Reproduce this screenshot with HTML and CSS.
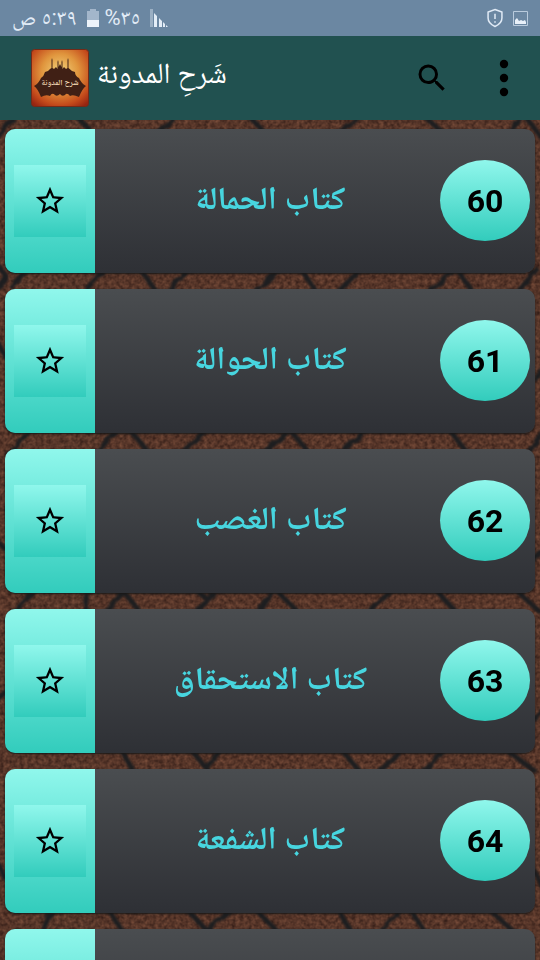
FILE: index.html
```html
<!DOCTYPE html>
<html lang="ar" dir="rtl">
<head>
  <meta charset="UTF-8">
  <meta name="viewport" content="width=device-width, initial-scale=1.0">
  <title>شَرحِ المدونة</title>
  <link rel="stylesheet" href="styles.css">
</head>
<body>
  <svg class="wall" viewBox="0 0 540 960" preserveAspectRatio="xMidYMid slice" aria-hidden="true">
    <filter id="grain" x="0" y="0" width="100%" height="100%" color-interpolation-filters="sRGB">
      <feTurbulence type="fractalNoise" baseFrequency="0.25" numOctaves="3" seed="8"/>
      <feColorMatrix values="0.32 0 0 0 0.18  0.22 0 0 0 0.1  0.16 0 0 0 0.08  0 0 0 0 1"/>
    </filter>
    <filter id="rough" color-interpolation-filters="sRGB">
      <feTurbulence type="fractalNoise" baseFrequency="0.08" numOctaves="2" seed="3"/>
      <feDisplacementMap in="SourceGraphic" scale="5"/>
      <feGaussianBlur stdDeviation="1"/>
    </filter>
    <rect width="540" height="960" filter="url(#grain)"/>
    <g class="cracks" filter="url(#rough)">
      <path d="M-10 145L14 118M76 116L90 130M155 134L180 114M245 112L266 134M340 134L362 114M420 112L446 136M505 136L524 116M525 116L545 142"/>
      <path d="M-8 258L6 276L-6 294M10 288L30 266M84 292L104 270M138 266L158 294M166 294L188 270M256 292L280 268M300 268L318 294M338 292L360 270M430 292L452 270M456 268L474 294M516 294L538 268"/>
      <path d="M8 456L30 430M96 454L116 430M130 430L150 454M206 430L180 454M262 454L290 430M290 430L310 454M340 454L366 430M450 430L468 454M526 456L544 430"/>
      <path d="M14 612L38 588M84 612L88 588M104 612L124 592L140 612M196 590L208 600L216 590M196 612L208 600M258 612L272 590M276 590L298 612M370 612L392 590M436 590L456 612M516 590L540 612"/>
      <path d="M120 748L134 772M190 748L206 768L222 748M340 748L360 772M380 772L402 748M444 748L424 772M504 748L536 772"/>
      <path d="M38 934L54 908M108 908L124 934M186 908L206 930L232 908M254 908L280 934M338 908L352 934M378 934L402 908M410 908L426 934M488 908L516 934"/>
      <path d="M-4 340L8 360M-4 540L6 550M-4 700L8 690M-4 860L6 880M534 380L544 370M534 560L544 550M534 720L544 710M534 870L544 890"/>
    </g>
  </svg>

  <div class="statusbar">
    <div class="status-group">
      <svg width="15" height="15" viewBox="0 0 15 15"><path d="M.5.500H14.500V14.500H.5Z" fill="none" stroke="#b9cbdd"/><path d="M2 13V9L4 7L6 10L8 9L10 10L12 9L13 11V13Z" fill="#e8f0f9"/></svg>
      <svg width="16" height="20" viewBox="0 0 15 18" fill="none" stroke="#e1ebf6" stroke-width="1.4"><path d="M7.500 1L14 3.500V9Q14 14 7.500 17Q1 14 1 9V3.500ZM7.500 5V10M7.500 12V13.500"/></svg>
    </div>
    <div class="status-group">
      <svg width="18" height="18" viewBox="0 0 18 18" fill="#e3edf7"><path d="M0 0H3V18H0Z" opacity=".4"/><path d="M4 4L7 7V18H4ZM9 9L12 12V18H9ZM13 13L15 15V18H13ZM16 16L18 18H16Z"/></svg>
      <span class="battery">
        <span dir="ltr">%٣٥</span>
        <svg width="12" height="18" viewBox="0 0 12 18"><path d="M3 0H9V2H12V18H0V2H3Z" fill="#a3b6cb"/><path d="M0 11H12V18H0Z" fill="#edf3fa"/></svg>
      </span>
      <span>٥:٣٩ ص</span>
    </div>
  </div>

  <header class="toolbar">
    <button class="tool menu" aria-label="القائمة">
      <svg width="10" height="38" viewBox="0 0 10 38"><circle cx="5" cy="5" r="4.200"/><circle cx="5" cy="19" r="4.200"/><circle cx="5" cy="33" r="4.200"/></svg>
    </button>
    <button class="tool" aria-label="بحث">
      <svg width="36" height="36" viewBox="0 0 24 24"><path d="M15.500 14h-.79l-.28-.27A6.471 6.471 0 0 0 16 9.500 6.500 6.500 0 1 0 9.500 16c1.610 0 3.090-.59 4.230-1.570l.27.280v.79l5 4.990L20.490 19l-4.990-5zm-6 0C7.010 14 5 11.990 5 9.500S7.010 5 9.500 5 14 7.010 14 9.500 11.990 14 9.500 14z"/></svg>
    </button>
    <h1 class="title">شَرحِ المدونة</h1>
    <svg class="logo" viewBox="0 0 58 58" role="img" aria-label="شرح المدونة">
      <defs>
        <radialGradient id="sun" cx=".5" cy=".4" r=".72">
          <stop offset="0" stop-color="#f3d47c"/>
          <stop offset=".45" stop-color="#e0953d"/>
          <stop offset=".8" stop-color="#c44a1b"/>
          <stop offset="1" stop-color="#982511"/>
        </radialGradient>
      </defs>
      <rect x=".5" y=".5" width="57" height="57" rx="3" fill="url(#sun)" stroke="#742a18"/>
      <path d="M3 37Q8 34 10 29Q13 27 14 23Q17 23 19 20L20.500 19V11L21 9L21.500 11V19L23 20L25 18L26.500 20V13L27 11L27.500 13V18L29 15L30.500 18V13L31 11L31.500 13V20L33 18L35 20L36.500 19V11L37 9L37.500 11V19Q40 22 44 23Q44 27 48 29Q50 34 55 37Q51 40 48 48Q42 45 39 47Q36 43 34 46Q31 48 29 45Q26 48 24 46Q21 43 19 47Q15 45 10 48Q7 40 3 37Z" fill="#402015"/>
      <text x="29" y="36" text-anchor="middle">شرح المدونة</text>
    </svg>
  </header>

  <main class="list">
    <article class="card">
      <span class="number">60</span>
      <h2>كتاب الحمالة</h2>
      <div class="side"><button class="star" aria-label="المفضلة"><svg viewBox="0 0 24 24"><use href="#star"/></svg></button></div>
    </article>
    <article class="card">
      <span class="number">61</span>
      <h2>كتاب الحوالة</h2>
      <div class="side"><button class="star" aria-label="المفضلة"><svg viewBox="0 0 24 24"><use href="#star"/></svg></button></div>
    </article>
    <article class="card">
      <span class="number">62</span>
      <h2>كتاب الغصب</h2>
      <div class="side"><button class="star" aria-label="المفضلة"><svg viewBox="0 0 24 24"><use href="#star"/></svg></button></div>
    </article>
    <article class="card">
      <span class="number">63</span>
      <h2>كتاب الاستحقاق</h2>
      <div class="side"><button class="star" aria-label="المفضلة"><svg viewBox="0 0 24 24"><use href="#star"/></svg></button></div>
    </article>
    <article class="card">
      <span class="number">64</span>
      <h2>كتاب الشفعة</h2>
      <div class="side"><button class="star" aria-label="المفضلة"><svg viewBox="0 0 24 24"><use href="#star"/></svg></button></div>
    </article>
    <article class="card">
      <div class="side"></div>
    </article>
  </main>

  <svg class="symbols" aria-hidden="true">
    <symbol id="star" viewBox="0 0 24 24"><path d="M22 9.240l-7.190-.62L12 2 9.190 8.630 2 9.240l5.460 4.730L5.820 21 12 17.270 18.180 21l-1.630-7.030L22 9.240zM12 15.400l-3.760 2.270 1-4.280-3.320-2.880 4.380-.38L12 6.100l1.710 4.040 4.380.38-3.320 2.880 1 4.280L12 15.400z"/></symbol>
  </svg>
</body>
</html>
```
FILE: styles.css
```css
* {
  box-sizing: border-box;
  margin: 0;
  padding: 0;
}
body {
  height: 100vh;
  display: flex;
  flex-direction: column;
  overflow: hidden;
  background: #3b271f;
  font-family: Roboto, "Noto Naskh Arabic", "DejaVu Sans", sans-serif;
}
svg {
  display: block;
  flex: none;
}
button {
  border: 0;
  background: none;
}
.symbols {
  position: absolute;
  width: 0;
  height: 0;
}

/* brick wall behind the list */
.wall {
  position: fixed;
  top: 0;
  left: 0;
  z-index: -1;
  width: 100%;
  height: 100%;
}
.cracks {
  fill: none;
  stroke: #1d1e20;
  stroke-width: 5;
}

.statusbar {
  flex: none;
  height: 36px;
  padding: 0 12px;
  display: flex;
  align-items: center;
  justify-content: space-between;
  background: #6b87a2;
  color: #e1ebf6;
  font-size: 22px;
  line-height: 32px;
}
.status-group {
  display: flex;
  align-items: center;
  gap: 10px;
}
.battery {
  display: flex;
  align-items: center;
  gap: 6px;
}

.toolbar {
  flex: none;
  height: 84px;
  padding: 0 12px 0 31px;
  display: flex;
  align-items: center;
  background: #215150;
}
.tool {
  width: 48px;
  height: 48px;
  display: flex;
  align-items: center;
  justify-content: center;
}
.menu {
  margin-left: 24px;
}
.title {
  margin-right: auto;
  margin-left: 8px;
  padding-bottom: 10px;
  color: #fff;
  font-size: 29px;
  font-weight: normal;
  line-height: 48px;
  white-space: nowrap;
}
.logo {
  width: 58px;
  height: 58px;
}
.logo text {
  fill: #e9cfac;
  font-size: 8px;
  font-weight: bold;
}

.list {
  flex: 1;
  min-height: 0;
  padding: 9px 5px 0;
  display: flex;
  flex-direction: column;
  gap: 16px;
  overflow: hidden;
}
.card {
  flex: none;
  height: 144px;
  padding-right: 5px;
  display: flex;
  align-items: center;
  border-radius: 10px;
  overflow: hidden;
  background: linear-gradient(#4a4d50, #2e3035);
  box-shadow: 0 1px 2px #191817;
}
.number {
  width: 90px;
  height: 81px;
  margin-bottom: 2px;
  border-radius: 50%;
  background: linear-gradient(#90f7ec, #32ccbc);
  color: #000;
  font-size: 32px;
  font-weight: bold;
  line-height: 82px;
  text-align: center;
}
.card h2 {
  flex: 1;
  padding: 0 0 6px 6px;
  color: #47d5df;
  font-size: 32px;
  line-height: 48px;
  text-align: center;
  white-space: nowrap;
}
.side {
  width: 90px;
  height: 100%;
  margin-right: auto;
  display: flex;
  align-items: center;
  justify-content: center;
  background: linear-gradient(#90f7ec, #32ccbc);
}
.star {
  width: 72px;
  height: 72px;
  display: flex;
  align-items: center;
  justify-content: center;
  background: linear-gradient(#90f7ec, #32ccbc);
}
.star svg {
  width: 34px;
  height: 34px;
}
```
